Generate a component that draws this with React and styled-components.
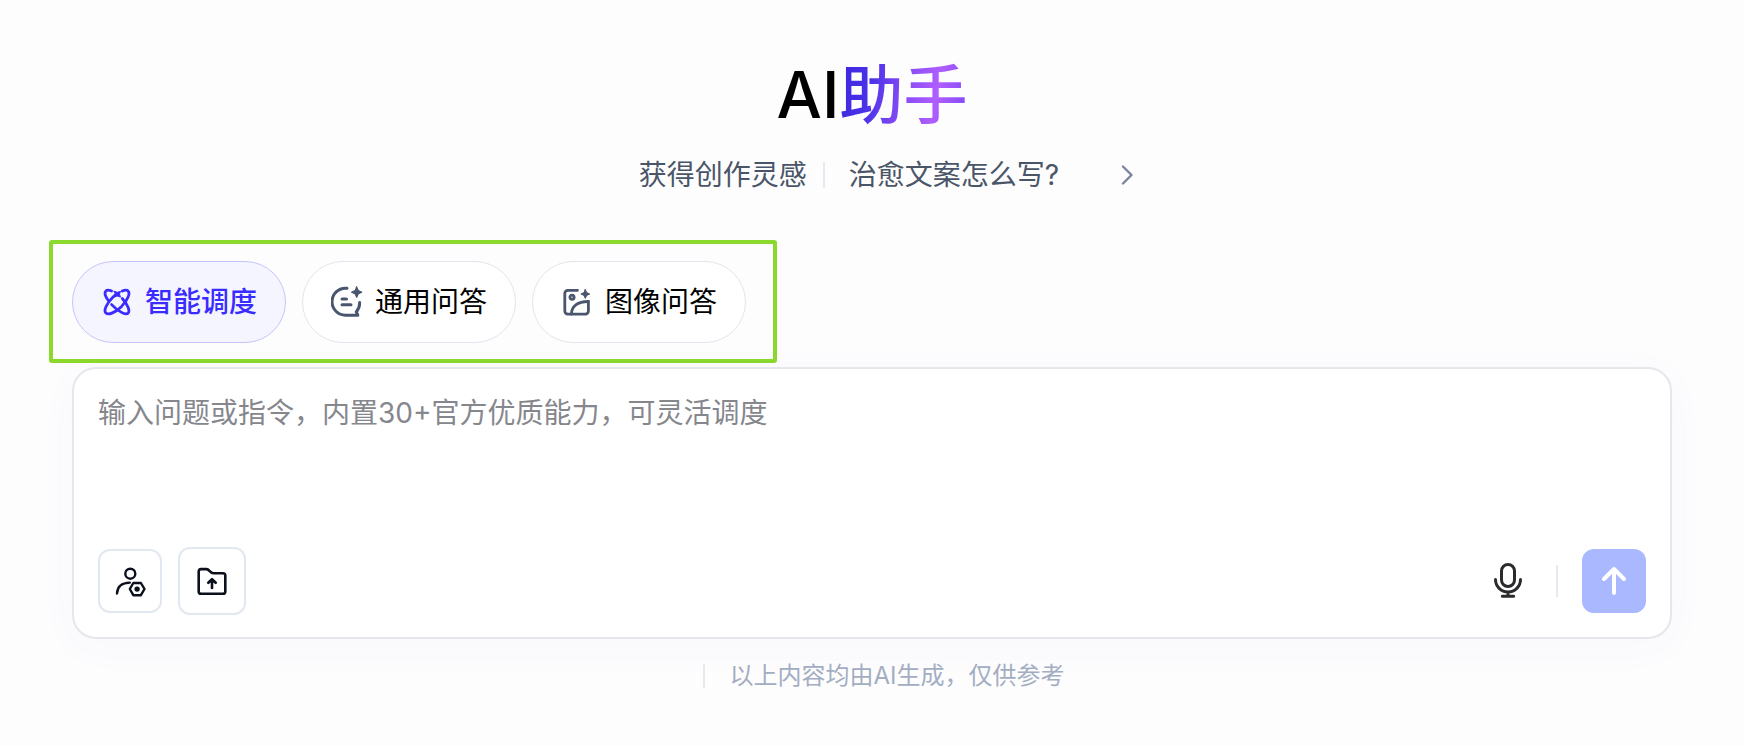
import React from 'react'
import styled, { createGlobalStyle } from 'styled-components'

function OrbitIcon() {
  return (
    <Icon viewBox="0 0 32 32" $size={32} $stroke={2.8}>
      <path d="M10.6 5C8 3.9 6 3.8 4.9 4.9c-1.7 1.7-.5 5.6 2.4 9.6" />
      <path d="M10.6 18.6c6 6.2 13.7 11.1 16.5 8.5 2-2 .2-8-5.8-14.6" />
      <path d="M21.2 5c2.7-1.2 4.8-1.3 5.9-.1 2.5 2.5-.6 9.3-6.5 15.5-6 5.9-13.1 9.2-15.7 6.7C2.3 24.5 5.7 17.4 11.6 11.5l2.6-2.4" />
      <path d="M13.2 5.3l3 1 3.3-.9-1 2.7 1 3-3.2-1-2.9.8.8-2.8z" fill="currentColor" strokeWidth="1" />
    </Icon>
  )
}

function ChatIcon() {
  return (
    <Icon viewBox="0 0 32 32" $size={32} $stroke={3}>
      <path d="M16 2.2h-1.5A13.5 13.5 0 0 0 14.5 29.2h12.3l-1.5-3.4a13 13 0 0 0 3.3-9.3" />
      <path d="M11 13h4.5M11 18.7h9" />
      <path d="M25.7.8l1.7 3.7 3.7 1.7-3.7 1.7-1.7 3.7-1.7-3.7-3.7-1.7 3.7-1.7z" fill="currentColor" strokeWidth="1" />
    </Icon>
  )
}

function ImageIcon() {
  return (
    <Icon viewBox="0 0 32 32" $size={32} $stroke={2.8}>
      <path d="M16.5 4.3H6.8a3 3 0 0 0-3 3v17.8a3 3 0 0 0 3 3h17.6a3 3 0 0 0 3-3V15.5" />
      <circle cx="11" cy="11.3" r="2.1" />
      <path d="M10.5 28c0-7.5 6-12.5 16.8-12.5" />
      <path d="M24.3 3.6l1.4 3 3 1.4-3 1.4-1.4 3-1.4-3-3-1.4 3-1.4z" fill="currentColor" strokeWidth="1" />
    </Icon>
  )
}

function PersonIcon() {
  return (
    <Icon viewBox="0 0 32 32" $size={32} $stroke={2.4}>
      <circle cx="16.3" cy="8.7" r="5" />
      <path d="M3 28.5C3.3 21.5 8 17.8 15.8 17.6" />
      <path d="M19.3 18h7.6l3.6 6-3.6 6.2h-7.6L15.8 24z" />
      <circle cx="23.1" cy="24.1" r="1.5" fill="currentColor" />
    </Icon>
  )
}

function FolderIcon() {
  return (
    <Icon viewBox="0 0 32 32" $size={32} $stroke={2.6}>
      <path d="M5 4.1h5.5c3 0 3.5 4.2 7 4.2H27c1.5 0 2.3.8 2.3 2.3v15.8c0 1.5-.8 2.3-2.3 2.3H5c-1.5 0-2.3-.8-2.3-2.3V6.4C2.7 4.9 3.5 4.1 5 4.1z" />
      <path d="M16 23v-8M12.3 17.8L16 14.2l3.7 3.6" />
    </Icon>
  )
}

function MicIcon() {
  return (
    <Icon viewBox="0 0 36 36" $size={36} $stroke={3}>
      <rect x="11.5" y="1.5" width="13" height="22" rx="6.5" />
      <path d="M5.5 16.5a12.5 12.5 0 0 0 25 0M18 29v4M12.3 33.3h11.4" />
    </Icon>
  )
}

function SendIcon() {
  return (
    <Icon viewBox="0 0 32 32" $size={32} $stroke={4}>
      <path d="M16 28V4M6 14L16 4l10 10" />
    </Icon>
  )
}

const modes = [
  { id: 'smart', label: '智能调度', icon: <OrbitIcon />, active: true },
  { id: 'chat', label: '通用问答', icon: <ChatIcon /> },
  { id: 'image', label: '图像问答', icon: <ImageIcon /> },
]

function App() {
  return (
    <>
      <GlobalStyle />
      <Page lang="zh-CN">
        <Title>AI<span>助手</span></Title>

        <Inspiration>
          <span>获得创作灵感</span>
          <Divider $height={26} $before={16} $after={24} />
          <a href="#topic">治愈文案怎么写?</a>
          <NextButton type="button" aria-label="下一个">
            <Icon viewBox="0 0 12 20" $size={20} $stroke={2.4}>
              <path d="M2 1.5l8.5 8.5L2 18.5" />
            </Icon>
          </NextButton>
        </Inspiration>

        <ModeBar>
          {modes.map(mode => (
            <ModeButton type="button" key={mode.id} $active={mode.active}>
              {mode.icon}
              <span>{mode.label}</span>
            </ModeButton>
          ))}
        </ModeBar>

        <Composer>
          <textarea
            rows={3}
            aria-label="输入问题"
            placeholder="输入问题或指令，内置30+官方优质能力，可灵活调度"
          />
          <div className="tools">
            <ToolButton type="button" $size={64} aria-label="角色设置"><PersonIcon /></ToolButton>
            <ToolButton type="button" $size={68} aria-label="上传文件"><FolderIcon /></ToolButton>
            <MicButton type="button" aria-label="语音输入"><MicIcon /></MicButton>
            <Divider $height={32} $before={24} $after={24} />
            <SendButton type="button" aria-label="发送"><SendIcon /></SendButton>
          </div>
        </Composer>

        <Footnote>
          <Divider $height={24} $before={24} $after={24} />
          <span>以上内容均由AI生成，仅供参考</span>
        </Footnote>
      </Page>
    </>
  )
}

export default App

const GlobalStyle = createGlobalStyle`
  *{
    box-sizing:border-box;
  }

  body{
    margin:0;
    background-color:#fdfdfe;
    font-family: Inter, 'Noto Sans CJK SC', sans-serif;
  }

  button, textarea{
    font-family:inherit;
    margin:0;
  }

  button{
    cursor:pointer;
  }
`

const Icon = styled.svg`
  width:${p => p.$size}px;
  height:${p => p.$size}px;
  flex-shrink:0;
  fill:none;
  stroke:currentColor;
  stroke-width:${p => p.$stroke};
  stroke-linecap:round;
  stroke-linejoin:round;
`

const Page = styled.main`
  display:flex;
  flex-direction:column;
  padding:57px 72px 48px;
`

const Title = styled.h1`
  margin:0;
  text-align:center;
  font-size:64px;
  line-height:76px;
  font-weight:500;
  color:#000;

  span{
    background:linear-gradient(100deg, #3a26e0 0%, #4a32e8 25%, #8a4cf6 52%, #b05eff 74%, #7a48f5 100%);
    background-clip:text;
    -webkit-background-clip:text;
    color:transparent;
  }
`

const Divider = styled.i`
  width:2px;
  height:${p => p.$height}px;
  margin:0 ${p => p.$after}px 0 ${p => p.$before}px;
  background-color:#e5e9f0;
`

const Inspiration = styled.div`
  display:flex;
  justify-content:center;
  align-items:center;
  margin-top:22px;
  padding-left:32px;
  font-size:28px;
  line-height:40px;
  color:#4a5568;

  a{
    color:inherit;
    text-decoration:none;
  }
`

const NextButton = styled.button`
  display:flex;
  margin-left:58px;
  padding:0;
  border:none;
  background:none;
  color:#7c859b;
`

const ModeBar = styled.div`
  display:flex;
  gap:16px;
  width:fit-content;
  margin:45px 0 4px -23px;
  padding:17px 27px 16px 19px;
  border:4px solid #8bd92c;
  border-radius:3px;
`

const ModeButton = styled.button`
  display:flex;
  align-items:center;
  gap:12px;
  height:82px;
  padding:0 28px;
  border:1px solid ${p => p.$active ? '#c5c4fb' : '#e2e5ec'};
  border-radius:41px;
  background-color:${p => p.$active ? '#f5f5ff' : '#fff'};
  color:${p => p.$active ? '#3a2cff' : '#000'};
  font-size:28px;
  line-height:40px;
  font-weight:${p => p.$active ? 500 : 400};

  svg{
    color:${p => p.$active ? '#3a2cff' : '#4a566e'};
  }
`

const Composer = styled.form`
  display:flex;
  flex-direction:column;
  padding:24px 24px 22px;
  border:2px solid #e6e7ea;
  border-radius:24px;
  background-color:#fff;
  box-shadow:0 8px 40px rgba(80, 90, 200, 0.03);

  textarea{
    padding:0;
    border:none;
    outline:none;
    resize:none;
    background:none;
    color:#111827;
    font-size:28px;
    line-height:40px;
  }

  textarea::placeholder{
    color:#86878d;
    opacity:1;
  }

  .tools{
    display:flex;
    align-items:center;
    margin-top:34px;
  }
`

const ToolButton = styled.button`
  display:flex;
  justify-content:center;
  align-items:center;
  width:${p => p.$size}px;
  height:${p => p.$size}px;
  margin-right:16px;
  padding:0;
  border:2px solid #e2e8f0;
  border-radius:12px;
  background-color:#fff;
  color:#0b101c;
`

const MicButton = styled.button`
  display:flex;
  margin-left:auto;
  margin-right:6px;
  padding:0;
  border:none;
  background:none;
  color:#2b2b2e;
`

const SendButton = styled.button`
  display:flex;
  justify-content:center;
  align-items:center;
  width:64px;
  height:64px;
  padding:0;
  border:none;
  border-radius:12px;
  background-color:#a9b8ff;
  color:#fff;
`

const Footnote = styled.footer`
  display:flex;
  justify-content:center;
  align-items:center;
  margin-top:19px;
  font-size:24px;
  line-height:36px;
  color:#a3adc2;
`
